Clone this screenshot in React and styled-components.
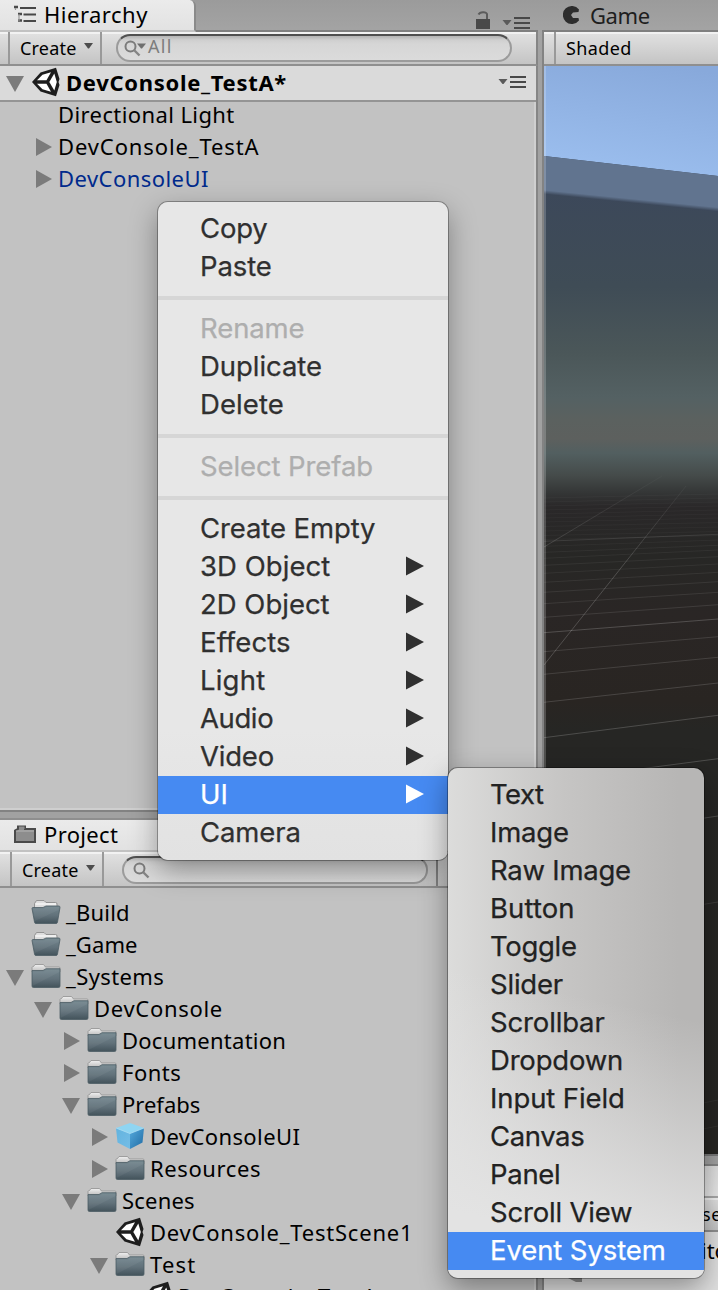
import React from "react";
import styled, { createGlobalStyle, css } from "styled-components";

const GlobalStyle = createGlobalStyle`
  * { box-sizing: border-box; }
  body { margin: 0; background: #a1a1a1; overflow: hidden; }
`;

const editorFont = css`
  font-family: "Noto Sans", "Open Sans", sans-serif;
  font-size: 22px;
  white-space: pre;
  color: #000;
`;

const Editor = styled.main`
  position: relative;
  width: 718px;
  height: 1290px;
  overflow: hidden;
  display: grid;
  grid-template-columns: 538px 176px;
  column-gap: 4px;
  background: linear-gradient(#9b9b9b, #a4a4a4 32px, #a1a1a1 60px);
  ${editorFont}
`;

const Column = styled.div`
  display: flex;
  flex-direction: column;
  min-width: 0;
`;

const RightColumn = styled(Column)`
  width: 176px;
`;

const TabStrip = styled.header`
  display: flex;
  flex: none;
  height: ${(p) => p.$height || 32}px;
  background: linear-gradient(#9b9b9b, #a4a4a4);
  box-shadow: inset 0 -2px #808080;
`;

const Tab = styled.div`
  display: flex;
  align-items: center;
  width: 196px;
  padding: ${(p) => (p.$topLine ? 2 : 0)}px 0 2px 14px;
  gap: 7px;
  line-height: 28px;
  letter-spacing: ${(p) => p.$track}px;
  background: linear-gradient(#ebebeb, #e2e2e2);
  border-right: 2px solid #8a8a8a;
  border-bottom: 2px solid #c2c2c2;
  border-top-right-radius: 6px;
  box-shadow: ${(p) => (p.$topLine ? "inset 0 2px #8e8e8e" : "none")};
`;

const IdleTab = styled.div`
  display: flex;
  align-items: center;
  height: 29px;
  padding-left: 21px;
  gap: 9px;
  color: #1e1e1e;
  letter-spacing: -0.4px;
`;

const TabTools = styled.div`
  display: flex;
  align-items: flex-end;
  margin-left: auto;
  padding: 0 8px 3px 0;
  gap: 12px;
`;

const Toolbar = styled.div`
  display: flex;
  flex: none;
  height: ${(p) => p.$height || 34}px;
  background: linear-gradient(#f2f2f2 0, #f2f2f2 2px, #e0e0e0 2px, #c4c4c4 100%);
  border-bottom: 2px solid #8f8f8f;
  border-right: ${(p) => (p.$edge ? "2px solid #858585" : "none")};
`;

const ToolGap = styled.span`
  flex: none;
  width: ${(p) => p.$width}px;
  border-right: 2px solid #999;
`;

const ToolButton = styled.div`
  display: flex;
  flex: none;
  align-items: center;
  width: ${(p) => p.$width}px;
  padding: ${(p) => p.$drop || 0}px 7px 0 10px;
  justify-content: space-between;
  font-size: 18px;
  line-height: 30px;
  letter-spacing: ${(p) => p.$track || 0.2}px;
  border-right: ${(p) => (p.$open ? "none" : "2px solid #999")};
  svg { margin-bottom: 4px; }
`;

const SearchField = styled.div`
  display: flex;
  flex: none;
  align-items: center;
  width: ${(p) => p.$width}px;
  height: 28px;
  margin: ${(p) => p.$top}px 0 0 ${(p) => p.$left}px;
  padding-left: ${(p) => p.$inset}px;
  border: 2px solid #9b9b9b;
  border-top-color: #505050;
  border-radius: 14px;
  background: linear-gradient(#b4b4b4 0, #cfcfcf 4px, #d6d6d6 8px, #dbdbdb 100%);
  font-size: 18px;
  line-height: 22px;
  letter-spacing: 1.3px;
  color: #7d7d7d;
`;

const SearchText = styled.span`
  margin: -4px 0 0 1px;
`;

const SearchEnd = styled.span`
  width: 10px;
  border-right: 2px solid #858585;
`;

const Panel = styled.section`
  flex: none;
  height: ${(p) => p.$height}px;
  background: #c2c2c2;
  border-right: 2px solid #858585;
  border-bottom: 2px solid #828282;
  box-shadow: inset -2px -2px #cfcfcf;
`;

const SceneHeader = styled.div`
  display: flex;
  align-items: center;
  height: 36px;
  padding: 0 10px 2px 4px;
  background: #dadada;
  border-bottom: 2px solid #949494;
  font-weight: 700;
  letter-spacing: 0.7px;
`;

const HeaderTools = styled.span`
  display: flex;
  margin-left: auto;
`;

const Rows = styled.div`
  display: flex;
  flex-direction: column;
  margin-top: ${(p) => p.$offset}px;
`;

const Row = styled.div`
  display: flex;
  align-items: center;
  flex: none;
  height: 32px;
  padding-left: ${(p) => p.$indent}px;
  letter-spacing: ${(p) => p.$track}px;
  color: ${(p) => (p.$prefab ? "#002a8c" : "#000")};
`;

const ArrowBox = styled.span`
  display: flex;
  flex: none;
  align-items: center;
  justify-content: center;
  width: 22px;
  height: 22px;
  margin: 3px ${(p) => p.$gap || 0}px 0 0;
`;

const IconBox = styled.span`
  display: flex;
  flex: none;
  width: 30px;
  margin: 0 5px 0 5px;
  justify-content: center;
`;

const ProjectGap = styled.div`
  flex: none;
  height: 6px;
`;

const SceneView = styled.div`
  flex: none;
  height: 1090px;
  border-left: 2px solid #838383;
  border-bottom: 2px solid #777;
  svg { display: block; }
`;

const RightBar = styled.div`
  flex: none;
  border-left: 2px solid #838383;
`;

const ConsoleTab = styled.div`
  flex: none;
  height: 34px;
  margin-top: 8px;
  border: solid #858585;
  border-width: 2px 0 0 2px;
  background: linear-gradient(#dedede, #e8e8e8 28px);
  box-shadow: inset 0 -2px #a8a8a8;
`;

const ConsoleCell = styled.div`
  padding-left: 103px;
  font-size: 18px;
  line-height: 32px;
  letter-spacing: 0.4px;
`;

const ConsoleBody = styled.div`
  display: flex;
  flex-direction: column;
  flex: 1;
  border-left: 2px solid #858585;
  background: #dfdfdf;
  line-height: 34px;
`;

const ConsoleLine = styled.div`
  flex: none;
  height: 36px;
  padding: 1px 0 0 124px;
`;

const ConsoleGlyph = styled.div`
  display: flex;
  padding-left: 22px;
`;

const menuShell = css`
  position: absolute;
  z-index: 2;
  display: flex;
  flex-direction: column;
  padding: 8px 0;
  border-radius: 10px;
  font-family: Inter, "Liberation Sans", sans-serif;
  font-size: 27.5px;
  line-height: 36px;
`;

const ContextMenu = styled.nav`
  ${menuShell}
  left: 158px;
  top: 202px;
  width: 290px;
  color: #303030;
  background: linear-gradient(#e7e7e7 80%, #e2e2e2);
  box-shadow: 0 0 0 1px rgba(0, 0, 0, 0.3), 0 10px 28px rgba(0, 0, 0, 0.36);
`;

const SubMenu = styled.nav`
  ${menuShell}
  left: 448px;
  top: 768px;
  width: 256px;
  color: #222;
  background:
    linear-gradient(192deg, rgba(228, 228, 228, 0) 45%, #e3e3e3 88%),
    linear-gradient(to right, #dcdcdb, #c6c5c4 45%, #b7b6b5 90%);
  box-shadow: 0 0 0 1px rgba(0, 0, 0, 0.32), 0 10px 28px rgba(0, 0, 0, 0.38);
`;

const MenuItem = styled.div`
  display: flex;
  align-items: center;
  justify-content: space-between;
  height: 38px;
  padding: 0 24px 2px 42px;
  letter-spacing: ${(p) => p.$track}px;
  color: ${(p) => (p.$active ? "#fff" : p.$disabled ? "#aeaeae" : "inherit")};
  background: ${(p) => (p.$active ? "#468af2" : "transparent")};
`;

const MenuLabel = styled.span`
  -webkit-text-stroke: 0.25px currentColor;
`;

const Divider = styled.div`
  height: 4px;
  margin: 10px 0;
  background: #d6d6d6;
`;

const Foldout = ({ open }) =>
  open ? (
    <svg width="18" height="16" viewBox="0 0 18 16"><path d="M0 0H18L9 16Z" fill="#7b7b7b" /></svg>
  ) : (
    <svg width="18" height="20" viewBox="0 0 18 20"><path d="M2 0L18 9L2 18Z" fill="#7b7b7b" /></svg>
  );

const Caret = () => (
  <svg width="9" height="6" viewBox="0 0 9 6"><path d="M0 0H9L5 5.500H4Z" fill="#4d4d4d" /></svg>
);

const OptionsIcon = () => (
  <svg width="28" height="12" viewBox="0 0 28 12">
    <path d="M.5 3H9.500L5.500 8H4.500Z" fill="#5a5a5a" />
    <path d="M12 1H28M12 6H28M12 11H28" stroke="#484848" strokeWidth="2" />
  </svg>
);

const LockIcon = () => (
  <svg width="14" height="18" viewBox="0 0 14 18">
    <path d="M0 8H14V18H0Z" fill="#494949" />
    <path d="M2.500 3.500C4 .6 10 .3 11 3V8" fill="none" stroke="#5c5c5c" strokeWidth="2" />
  </svg>
);

const HierarchyIcon = () => (
  <svg width="23" height="18" viewBox="0 0 23 18">
    <path d="M0 2H4M4 9H8M4 15.500H8" stroke="#4a4a4a" strokeWidth="2.600" />
    <path d="M1.500 3V5M5 9V16" stroke="#999" strokeWidth="1.200" />
    <path d="M6 3H22M9.500 9.500H22M9.500 16H22" stroke="#484848" strokeWidth="2" />
  </svg>
);

const ProjectIcon = () => (
  <svg width="23" height="18" viewBox="0 0 23 18">
    <path d="M1 17V5.500L4 4V1.500H11V4H21V17Z" fill="#8d8d8d" stroke="#4a4a4a" strokeWidth="2" />
    <path d="M2 6H20" stroke="#b5b5b5" strokeWidth="1" />
    <path d="M5 1.500H10.500V4H5Z" fill="#8d8d8d" />
  </svg>
);

const GameIcon = () => (
  <svg width="18" height="18" viewBox="0 0 18 18">
    <path d="M16 3.500A9 9 0 1 0 16 14.500L15.500 12H10L8 9L10 6.500L15.500 6Z" fill="#2d2d2d" />
  </svg>
);

const SearchIcon = ({ menu }) => (
  <svg width="23" height="18" viewBox="0 0 23 18">
    <circle cx="6.500" cy="7.500" r="5" fill="none" stroke="#7b7b7b" strokeWidth="2" />
    <path d="M10.500 11.500L15.500 16.500" stroke="#858585" strokeWidth="2.400" />
    {menu && <path d="M13 4.500H22L18 9.500H17Z" fill="#6f6f6f" />}
  </svg>
);

const UnityIcon = () => (
  <svg width="28" height="30" viewBox="0 0 28 30">
    <path d="M0 15L8.500 5.500L24 .8L27.500 12L26.500 15L27.500 18L24 29.200L8.500 24.500Z" fill="#1d1d1d" />
    <path d="M5 13.300L10.500 7.800L19 5.200L14.500 13.300Z" fill="#fff" />
    <path d="M5 16.700H14.500L19 24.800L10.500 22.200Z" fill="#fff" />
    <path d="M17.300 15L22.300 6.400L24.800 15L22.300 23.600Z" fill="#fff" />
  </svg>
);

const FolderIcon = () => (
  <svg width="30" height="26" viewBox="0 0 30 26">
    <defs>
      <linearGradient id="folderFront" x2="0" y2="1">
        <stop stopColor="#74878f" /><stop offset=".55" stopColor="#61717a" /><stop offset="1" stopColor="#43535b" />
      </linearGradient>
      <linearGradient id="folderTab" x2="0" y2="1">
        <stop stopColor="#f0f0f0" /><stop offset="1" stopColor="#b9b9b9" />
      </linearGradient>
    </defs>
    <path d="M1 8V4.500Q1.300 3.500 2.500 3.500L4 1.500H12.500L14.500 4H28Q29 4 29 5V9H1Z" fill="url(#folderTab)" stroke="#8f8f8f" strokeWidth=".8" />
    <path d="M1 7.500H12L15 5.700H29V23Q29 24.500 27.500 24.500H2.500Q1 24.500 1 23Z" fill="url(#folderFront)" stroke="#4c5d65" strokeWidth=".8" />
    <path d="M1.500 23V8.500H12.500L15.500 6.700H28.500V9Z" fill="#fff" opacity=".05" />
  </svg>
);

const OpenFolderIcon = () => (
  <svg width="30" height="26" viewBox="0 0 30 26">
    <path d="M3.500 10V4.500L5.500 1.500H13L15 3.500H24.500Q26 3.500 26 5V10Z" fill="#dedede" stroke="#8c8c8c" strokeWidth=".9" />
    <path d="M4.500 5H25" stroke="#f4f4f4" strokeWidth="1.500" />
    <path d="M1 9.500Q1 8.500 2 8.500H12L15 7H28Q29 7 29 8.500L26.500 23Q26.300 24.500 25 24.500H5Q3.700 24.500 3.500 23Z" fill="url(#folderFront)" stroke="#4c5d65" strokeWidth=".8" />
    <path d="M4 22L2 9.500H12.500L15.500 8H28L27.500 11Z" fill="#fff" opacity=".05" />
  </svg>
);

const PrefabIcon = () => (
  <svg width="30" height="28" viewBox="0 0 30 28">
    <defs>
      <linearGradient id="cubeLeft" x2="1" y2="1"><stop stopColor="#62b3df" /><stop offset="1" stopColor="#75bde6" /></linearGradient>
      <linearGradient id="cubeRight" x2="1" y2="1"><stop stopColor="#55aadd" /><stop offset="1" stopColor="#206aa3" /></linearGradient>
    </defs>
    <path d="M15 1L29 6L15 11.500L1 6Z" fill="#8fd5f2" />
    <path d="M1 6L15 11.500V27L2.500 20.500Z" fill="url(#cubeLeft)" />
    <path d="M29 6L15 11.500V27L27.500 20.500Z" fill="url(#cubeRight)" />
    <path d="M1 6L15 11.500L29 6" fill="none" stroke="#a9e0f7" strokeWidth=".8" />
  </svg>
);

const MenuArrow = () => (
  <svg width="18" height="20" viewBox="0 0 18 20"><path d="M0 .5L18 10L0 19.500Z" fill="currentColor" /></svg>
);

const GRID_LINES = [
  [541.3, 534.3, 0.1], [546.3, 540, 0.04], [552.3, 545.3, 0.05], [558.3, 550, 0.05], [565.3, 556.7, 0.06],
  [573.3, 564, 0.06], [582.3, 572.3, 0.07], [592.3, 581.7, 0.08], [603.7, 592.3, 0.09], [617.3, 604.7, 0.1],
  [632.7, 619, 0.19], [651.7, 636.7, 0.12], [674.3, 657.3, 0.13], [702.3, 683, 0.15], [737.7, 715.3, 0.18],
  [781.5, 758.7, 0.19], [842, 816, 0.18], [930, 902, 0.1], [1135, 1100, 0.05], [1160, 1126, 0.05],
];
const FAR_LINES = [496, 500, 504, 508, 512, 516, 520, 524.5, 529, 533.5, 537.5];

const SceneDrawing = () => (
  <svg width="174" height="1088" viewBox="544 66 174 1088">
    <defs>
      <linearGradient id="sky" gradientUnits="userSpaceOnUse" x1="640" y1="60" x2="620" y2="175">
        <stop stopColor="#88a9db" /><stop offset="1" stopColor="#9bbeee" />
      </linearGradient>
      <linearGradient id="ground" gradientUnits="userSpaceOnUse" x1="0" y1="190" x2="0" y2="1154">
        <stop stopColor="#3c485a" />
        <stop offset=".1" stopColor="#3f4c56" />
        <stop offset=".17" stopColor="#4b5759" />
        <stop offset=".215" stopColor="#546163" />
        <stop offset=".238" stopColor="#5b615f" />
        <stop offset=".258" stopColor="#5d605e" />
        <stop offset=".273" stopColor="#525f60" />
        <stop offset=".296" stopColor="#454b4a" />
        <stop offset=".314" stopColor="#343636" />
        <stop offset=".328" stopColor="#2a2829" />
        <stop offset=".38" stopColor="#272725" />
        <stop offset=".44" stopColor="#2a2625" />
        <stop offset=".53" stopColor="#292522" />
        <stop offset=".56" stopColor="#262624" />
        <stop offset="1" stopColor="#262522" />
      </linearGradient>
      <linearGradient id="ridge" gradientUnits="userSpaceOnUse" x1="544" y1="190" x2="543.6" y2="194">
        <stop stopColor="#61748f" /><stop offset="1" stopColor="#3c485a" />
      </linearGradient>
      <linearGradient id="rayFade" gradientUnits="userSpaceOnUse" x1="0" y1="476" x2="0" y2="570">
        <stop stopColor="#fff" stopOpacity=".02" /><stop offset="1" stopColor="#fff" stopOpacity=".18" />
      </linearGradient>
    </defs>
    <rect x="544" y="66" width="174" height="130" fill="url(#sky)" />
    <path d="M544 156L718 176V1154H544Z" fill="url(#ground)" />
    <path d="M544 156L718 176V212L544 194.500Z" fill="url(#ridge)" />
    <g stroke="#fff" fill="none">
      {FAR_LINES.map((y) => <path key={y} d={`M544 ${y + 2}L718 ${y - 2}`} opacity=".03" />)}
      {GRID_LINES.map(([l, r, o]) => <path key={l} d={`M544 ${l}L718 ${r}`} opacity={o} />)}
      <path d="M544 547L662 476" stroke="url(#rayFade)" />
      <path d="M544 665L686 486" stroke="url(#rayFade)" />
    </g>
    <path d="M544 66H546V1154H544Z" fill="#fff" opacity=".2" />
  </svg>
);

const TailGlyph = () => (
  <svg width="18" height="14" viewBox="0 0 18 14"><path d="M0 9L8 4H16V14H10Z" fill="#8a8a8a" /></svg>
);

const MENU = [
  { label: "Copy", track: -0.2 },
  { label: "Paste", track: -0.1 },
  null,
  { label: "Rename", track: -0.1, disabled: true },
  { label: "Duplicate", track: -0.05 },
  { label: "Delete", track: 0.1 },
  null,
  { label: "Select Prefab", track: -0.1, disabled: true },
  null,
  { label: "Create Empty", track: -0.1 },
  { label: "3D Object", track: 0.05, sub: true },
  { label: "2D Object", track: 0, sub: true },
  { label: "Effects", track: 0.1, sub: true },
  { label: "Light", track: 0.2, sub: true },
  { label: "Audio", track: -0.4, sub: true },
  { label: "Video", track: -0.2, sub: true },
  { label: "UI", track: 0, sub: true, active: true },
  { label: "Camera", track: -0.1 },
];

const UI_MENU = [
  { label: "Text", track: -0.5 },
  { label: "Image", track: -0.2 },
  { label: "Raw Image", track: -0.25 },
  { label: "Button", track: 0.1 },
  { label: "Toggle", track: -0.3 },
  { label: "Slider", track: -0.2 },
  { label: "Scrollbar", track: -0.15 },
  { label: "Dropdown", track: -0.2 },
  { label: "Input Field", track: -0.1 },
  { label: "Canvas", track: -0.4 },
  { label: "Panel", track: -0.3 },
  { label: "Scroll View", track: -0.2 },
  { label: "Event System", track: -0.1, active: true },
];

const PROJECT = [
  { name: "_Build", level: 0, track: 0.2, Icon: OpenFolderIcon },
  { name: "_Game", level: 0, track: 0.1, Icon: OpenFolderIcon },
  { name: "_Systems", level: 0, track: 0.4, Icon: FolderIcon, open: true },
  { name: "DevConsole", level: 1, track: 0.7, Icon: FolderIcon, open: true },
  { name: "Documentation", level: 2, track: 0.25, Icon: FolderIcon, open: false },
  { name: "Fonts", level: 2, track: 0.5, Icon: FolderIcon, open: false },
  { name: "Prefabs", level: 2, track: 0, Icon: FolderIcon, open: true },
  { name: "DevConsoleUI", level: 3, track: 0.4, Icon: PrefabIcon, open: false },
  { name: "Resources", level: 3, track: 0.6, Icon: FolderIcon, open: false },
  { name: "Scenes", level: 2, track: 0.2, Icon: FolderIcon, open: true },
  { name: "DevConsole_TestScene1", level: 3, track: 0.78, Icon: UnityIcon },
  { name: "Test", level: 3, track: 1.2, Icon: FolderIcon, open: true },
  { name: "DevConsole_TestA", level: 4, track: 0.75, Icon: UnityIcon },
];

const MenuItems = ({ items }) =>
  items.map((item, i) =>
    item ? (
      <MenuItem key={item.label} $track={item.track} $disabled={item.disabled} $active={item.active}>
        <MenuLabel>{item.label}</MenuLabel>
        {item.sub && <MenuArrow />}
      </MenuItem>
    ) : (
      <Divider key={i} />
    )
  );

export default function App() {
  return (
    <Editor>
      <GlobalStyle />
      <Column>
        <TabStrip>
          <Tab $track={0.5}><HierarchyIcon />Hierarchy</Tab>
          <TabTools><LockIcon /><OptionsIcon /></TabTools>
        </TabStrip>
        <Toolbar $edge>
          <ToolGap $width={10} />
          <ToolButton $width={92}>Create<Caret /></ToolButton>
          <SearchField $width={396} $left={14} $top={2} $inset={6}>
            <SearchIcon menu /><SearchText>All</SearchText>
          </SearchField>
        </Toolbar>
        <Panel $height={746}>
          <SceneHeader>
            <ArrowBox><Foldout open /></ArrowBox>
            <IconBox><UnityIcon /></IconBox>
            DevConsole_TestA*
            <HeaderTools><OptionsIcon /></HeaderTools>
          </SceneHeader>
          <Rows $offset={-4}>
            <Row $indent={58} $track={0.4}>Directional Light</Row>
            <Row $indent={32} $track={0.88}><ArrowBox $gap={4}><Foldout /></ArrowBox>DevConsole_TestA</Row>
            <Row $indent={32} $track={0.45} $prefab><ArrowBox $gap={4}><Foldout /></ArrowBox>DevConsoleUI</Row>
          </Rows>
        </Panel>
        <ProjectGap />
        <TabStrip as="div" $height={34}>
          <Tab $track={0.35} $topLine><ProjectIcon />Project</Tab>
        </TabStrip>
        <Toolbar $edge $height={36}>
          <ToolGap $width={12} />
          <ToolButton $width={92} $drop={2}>Create<Caret /></ToolButton>
          <SearchField $width={306} $left={18} $top={4} $inset={9}><SearchIcon /></SearchField>
          <SearchEnd />
        </Toolbar>
        <Panel $height={500}>
          <Rows $offset={8}>
            {PROJECT.map(({ name, level, track, Icon, open }) => (
              <Row key={name} $indent={4 + level * 28} $track={track}>
                <ArrowBox>{open !== undefined && <Foldout open={open} />}</ArrowBox>
                <IconBox><Icon /></IconBox>
                {name}
              </Row>
            ))}
          </Rows>
        </Panel>
      </Column>

      <RightColumn>
        <TabStrip><IdleTab><GameIcon />Game</IdleTab></TabStrip>
        <RightBar>
          <Toolbar>
            <ToolGap $width={12} />
            <ToolButton $width={160} $track={0.4} $open>Shaded</ToolButton>
          </Toolbar>
        </RightBar>
        <SceneView><SceneDrawing /></SceneView>
        <ConsoleTab />
        <RightBar>
          <Toolbar><ConsoleCell>Collapse</ConsoleCell></Toolbar>
        </RightBar>
        <ConsoleBody>
          <ConsoleLine>[Editor]</ConsoleLine>
          <ConsoleGlyph><TailGlyph /></ConsoleGlyph>
        </ConsoleBody>
      </RightColumn>

      <ContextMenu><MenuItems items={MENU} /></ContextMenu>
      <SubMenu><MenuItems items={UI_MENU} /></SubMenu>
    </Editor>
  );
}
